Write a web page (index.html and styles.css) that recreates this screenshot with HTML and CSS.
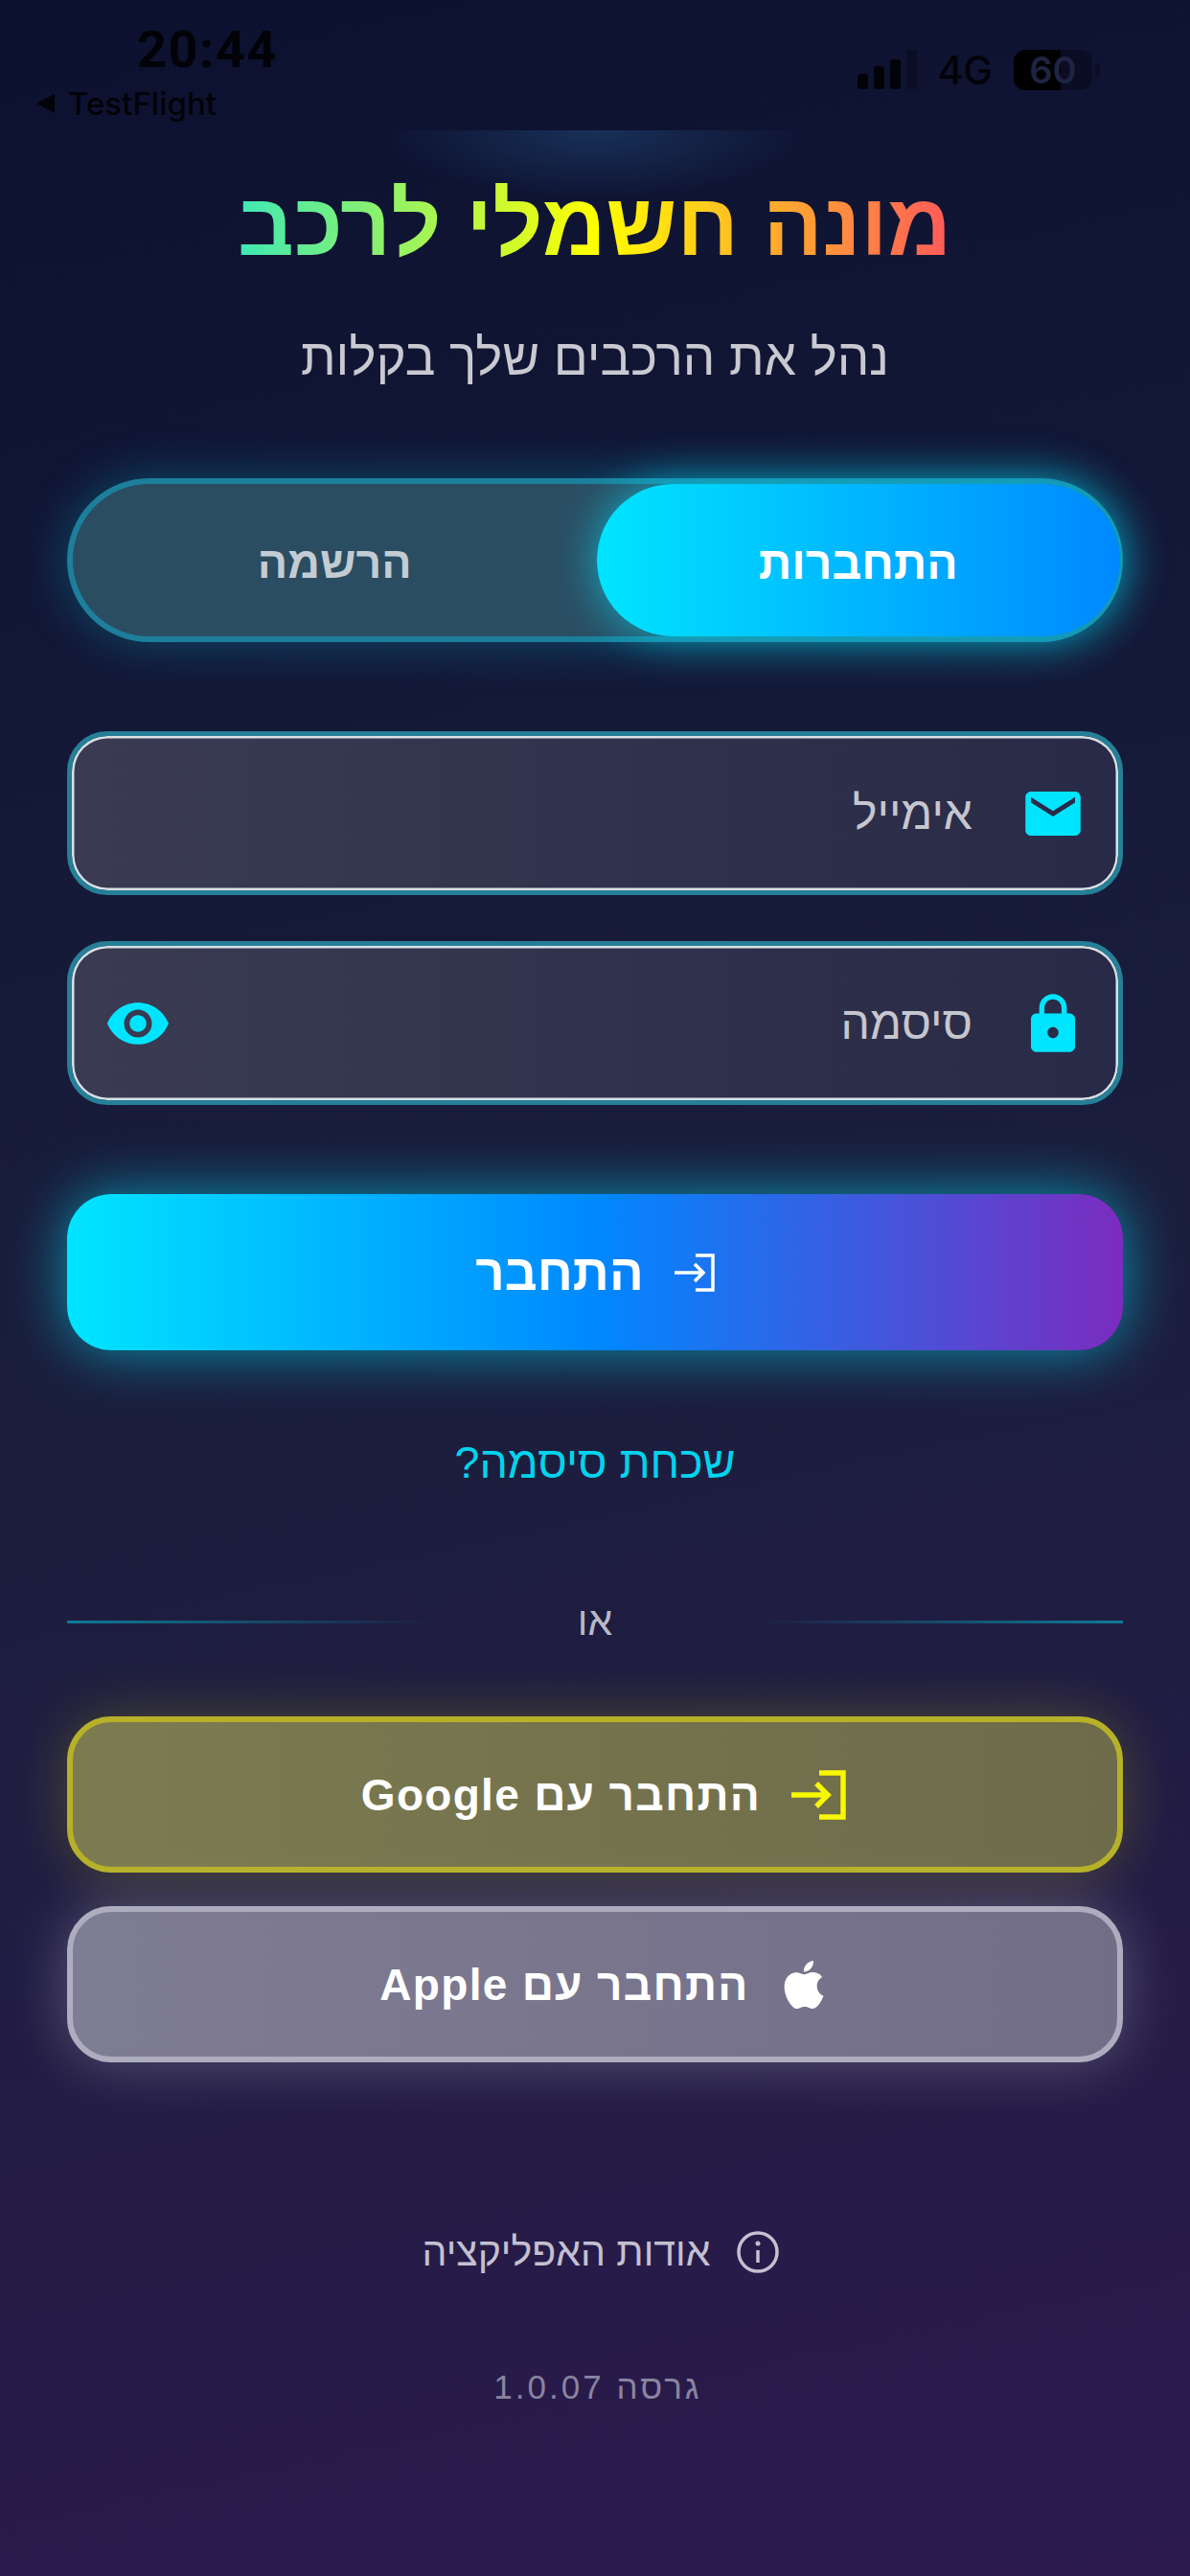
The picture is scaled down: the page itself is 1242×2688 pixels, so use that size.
FILE: index.html
```html
<!DOCTYPE html>
<html lang="he" dir="rtl">

<head>
	<meta charset="UTF-8">
	<meta name="viewport" content="width=device-width, initial-scale=1.0">
	<title>מונה חשמלי לרכב</title>
	<link rel="stylesheet" href="styles.css">
</head>

<body>

	<div class="status" dir="ltr">
		<div class="status__left">
			<div class="status__time">20:44</div>
			<div class="status__back"><span class="status__arrow"></span>TestFlight</div>
		</div>
		<div class="status__right">
			<div class="signal">
				<span class="signal__bar signal__bar--1"></span>
				<span class="signal__bar signal__bar--2"></span>
				<span class="signal__bar signal__bar--3"></span>
				<span class="signal__bar signal__bar--4"></span>
			</div>
			<div class="status__net">4G</div>
			<div class="battery">60</div>
			<span class="battery__tip"></span>
		</div>
	</div>

	<main class="page">
		<header class="head">
			<h1 class="head__title">מונה חשמלי לרכב</h1>
			<p class="head__sub">נהל את הרכבים שלך בקלות</p>
		</header>

		<div class="tabs">
			<div class="tabs__item tabs__item--on">התחברות</div>
			<div class="tabs__item">הרשמה</div>
		</div>

		<div class="field">
			<svg class="icon icon--mail" viewBox="2 4 20 16"><path d="M20 4H4c-1.1 0-2 .9-2 2v12c0 1.1.9 2 2 2h16c1.100 0 2-.9 2-2V6c0-1.100-.9-2-2-2zm0 4l-8 5-8-5V6l8 5 8-5v2z"/></svg>
			<span class="field__label">אימייל</span>
		</div>

		<div class="field field--pass">
			<svg class="icon icon--lock" viewBox="4 1 16 21"><path d="M18 8h-1V6c0-2.760-2.240-5-5-5S7 3.240 7 6v2H6c-1.100 0-2 .9-2 2v10c0 1.100.9 2 2 2h12c1.100 0 2-.9 2-2V10c0-1.100-.9-2-2-2zm-6 9c-1.100 0-2-.9-2-2s.9-2 2-2 2 .9 2 2-.9 2-2 2zm3.100-9H8.900V6c0-1.710 1.390-3.100 3.100-3.100 1.710 0 3.100 1.390 3.100 3.100v2z"/></svg>
			<span class="field__label">סיסמה</span>
			<svg class="icon icon--eye" viewBox="1 4.500 22 15"><path d="M12 4.500C7 4.500 2.730 7.610 1 12c1.730 4.390 6 7.500 11 7.500s9.270-3.110 11-7.500c-1.730-4.390-6-7.500-11-7.500zM12 17c-2.760 0-5-2.240-5-5s2.240-5 5-5 5 2.240 5 5-2.240 5-5 5zm0-8c-1.660 0-3 1.340-3 3s1.340 3 3 3 3-1.340 3-3-1.340-3-3-3z"/></svg>
		</div>

		<button class="login">
			<svg class="login__icon" viewBox="0 0 44 40"><path d="M24 2h18v36H24M2 20h29M23 11l9 9-9 9"/></svg>
			<span>התחבר</span>
		</button>

		<div class="forgot">שכחת סיסמה?</div>

		<div class="divider">
			<span class="divider__line divider__line--right"></span>
			<span class="divider__text">או</span>
			<span class="divider__line divider__line--left"></span>
		</div>

		<button class="social social--google">
			<svg class="social__enter" viewBox="0 0 57 52"><path d="M29 3h25v46H29M0 26h39M26 14l12 12-12 12"/></svg>
			<span>התחבר עם Google</span>
		</button>

		<button class="social social--apple">
			<svg class="social__apple" viewBox="0 0 24 24"><path d="M12.152 6.896c-.948 0-2.415-1.078-3.960-1.040-2.040.027-3.910 1.183-4.961 3.014-2.117 3.675-.546 9.103 1.519 12.090 1.013 1.454 2.208 3.090 3.792 3.039 1.520-.065 2.090-.987 3.935-.987 1.831 0 2.350.987 3.960.948 1.637-.026 2.676-1.480 3.676-2.948 1.156-1.688 1.636-3.325 1.662-3.415-.039-.013-3.182-1.221-3.220-4.857-.026-3.040 2.480-4.494 2.597-4.559-1.429-2.090-3.623-2.324-4.390-2.376-2-.156-3.675 1.090-4.610 1.090zM15.530 3.830c.843-1.012 1.400-2.427 1.245-3.830-1.207.052-2.662.805-3.532 1.818-.78.896-1.454 2.338-1.273 3.714 1.338.104 2.715-.688 3.559-1.701"/></svg>
			<span>התחבר עם Apple</span>
		</button>

		<div class="about">
			<svg class="about__icon" viewBox="0 0 44 44"><circle cx="22" cy="22" r="20"/><path d="M22 20v13"/><circle class="about__dot" cx="22" cy="13" r="2.500"/></svg>
			<span>אודות האפליקציה</span>
		</div>

		<div class="version">גרסה 1.0.07</div>
	</main>

</body>

</html>
```

FILE: styles.css
```css
* {
	box-sizing: border-box;
}

html,
body {
	margin: 0;
	height: 2688px;
}

body {
	width: 1242px;
	overflow: hidden;
	background: linear-gradient(168deg, #0c1130 0%, #1a1e3c 50%, #2c1a4e 100%);
	font-family: "Liberation Sans", Arial, sans-serif;
	color: #fff;
}

/* status bar */
.status {
	height: 136px;
	display: flex;
	justify-content: space-between;
	padding: 0 94px 0 38px;
	color: #020308;
}

.status__left {
	display: flex;
	flex-direction: column;
}

.status__time {
	margin: 22px 0 0 105px;
	font: 700 54px/60px Roboto, sans-serif;
	letter-spacing: 1.500px;
}

.status__back {
	display: flex;
	align-items: center;
	gap: 14px;
	margin-top: 8px;
	font: 500 33px/36px Inter, sans-serif;
}

.status__arrow {
	width: 0;
	height: 0;
	border-style: solid;
	border-width: 10px 19px 10px 0;
	border-color: transparent #020308 transparent transparent;
}

.status__right {
	display: flex;
	align-items: flex-start;
	padding-top: 52px;
}

.signal {
	display: flex;
	align-items: flex-end;
	gap: 6px;
	height: 41px;
	margin-right: 21px;
}

.signal__bar {
	width: 11px;
	border-radius: 3px;
	background: #020308;
}

.signal__bar--1 { height: 16px; }
.signal__bar--2 { height: 24px; }
.signal__bar--3 { height: 31px; }
.signal__bar--4 { height: 41px; background: #0a0d24; }

.status__net {
	margin-right: 22px;
	font: 500 41px/42px Inter, sans-serif;
}

.battery {
	width: 82px;
	height: 42px;
	border-radius: 12px;
	background: linear-gradient(90deg, #000 60%, #0a0d24 60%);
	color: #1e2442;
	font: 600 38px/42px Inter, sans-serif;
	text-align: center;
}

.battery__tip {
	width: 5px;
	height: 14px;
	margin: 14px 0 0 3px;
	border-radius: 0 4px 4px 0;
	background: #0a0d24;
}

/* page */
.page {
	padding: 0 70px;
	display: flex;
	flex-direction: column;
}

.head {
	height: 363px;
	margin: 0 -70px;
	padding-top: 45px;
	background: radial-gradient(ellipse 220px 72px at 50% 0, rgba(32, 72, 120, 0.55), rgba(32, 72, 120, 0) 100%) no-repeat;
	text-align: center;
}

.head__title {
	width: 744px;
	margin: 0 auto;
	background: linear-gradient(90deg, #3fe8b4 0%, #ffff00 50%, #ff5a5a 100%);
	-webkit-background-clip: text;
	background-clip: text;
	color: transparent;
	font-size: 92px;
	line-height: 106px;
	font-weight: 700;
	white-space: nowrap;
}

.head__sub {
	margin: 56px 0 0;
	font-size: 53px;
	line-height: 60px;
	color: #c9c9d1;
}

/* tabs */
.tabs {
	height: 171px;
	display: flex;
	border: 6px solid #1c7f9b;
	border-radius: 86px;
	background: #2b4d62;
	box-shadow: 0 0 50px rgba(0, 200, 240, 0.3);
}

.tabs__item {
	flex: 1;
	display: flex;
	align-items: center;
	justify-content: center;
	padding-top: 5px;
	border-radius: 80px;
	font-size: 46.500px;
	font-weight: 700;
	color: #c3ccd3;
}

.tabs__item--on {
	margin-right: -3px;
	background: linear-gradient(90deg, #00e5ff, #0088ff);
	box-shadow: 0 0 48px rgba(0, 229, 255, 0.65);
	font-size: 48px;
	color: #fff;
}

/* inputs */
.field {
	height: 171px;
	display: flex;
	align-items: center;
	padding-left: 37px;
	margin-top: 93px;
	border: 5px solid #257f97;
	border-radius: 42px;
	background: linear-gradient(90deg, #3a3b53, #282a47);
	box-shadow: inset 0 0 0 2.500px #d8e0e4;
}

.field--pass {
	margin-top: 48px;
}

.icon {
	fill: #00e5ff;
}

.icon--mail {
	width: 58px;
	height: 46px;
	margin: 0 39px 0 55px;
}

.icon--lock {
	width: 46px;
	height: 61px;
	margin: 0 45px 0 61px;
}

.icon--eye {
	width: 64px;
	height: 44px;
	margin-right: auto;
}

.field__label {
	font-size: 48px;
	color: #c6c6cf;
}

/* buttons */
.login {
	height: 163px;
	margin-top: 93px;
	display: flex;
	align-items: center;
	justify-content: center;
	gap: 30px;
	border: 0;
	border-radius: 46px;
	background: linear-gradient(90deg, #00e5ff 0%, #0088ff 50%, #7b2cbf 100%);
	box-shadow: 0 0 60px rgba(0, 229, 255, 0.6);
	font-family: inherit;
	font-size: 53px;
	font-weight: 700;
	color: #fff;
}

.login__icon {
	width: 44px;
	height: 40px;
	fill: none;
	stroke: #fff;
	stroke-width: 3.500;
}

.forgot {
	margin-top: 87px;
	font-size: 46.500px;
	line-height: 60px;
	text-align: center;
	color: #00d4ec;
}

.divider {
	margin-top: 111px;
	height: 50px;
	display: flex;
	align-items: center;
	justify-content: space-between;
}

.divider__line {
	width: 384px;
	height: 3px;
}

.divider__line--right {
	background: linear-gradient(270deg, #0f7a98, rgba(15, 122, 152, 0));
}

.divider__line--left {
	background: linear-gradient(90deg, #0f7a98, rgba(15, 122, 152, 0));
}

.divider__text {
	font-size: 41px;
	color: #b9b9c6;
}

.social {
	height: 163px;
	margin-top: 74px;
	display: flex;
	align-items: center;
	justify-content: center;
	gap: 32px;
	padding-left: 24px;
	border: 6px solid;
	border-radius: 46px;
	font-family: inherit;
	font-size: 46px;
	font-weight: 700;
	letter-spacing: 1.300px;
	color: #fff;
}

.social--google {
	border-color: #b6b128;
	background: linear-gradient(90deg, #7c7b50, #6e6b4a);
	box-shadow: 0 0 60px rgba(255, 255, 0, 0.2);
}

.social--apple {
	margin-top: 35px;
	border-color: #aeadc0;
	background: linear-gradient(90deg, #7f7d93, #726e88);
	box-shadow: 0 0 60px rgba(255, 255, 255, 0.25);
}

.social__enter {
	width: 57px;
	height: 52px;
	fill: none;
	stroke: #f8f800;
	stroke-width: 5.500;
}

.social__apple {
	width: 50px;
	height: 56px;
	fill: #fff;
}

.about {
	margin-top: 168px;
	height: 60px;
	display: flex;
	align-items: center;
	justify-content: center;
	gap: 28px;
	padding-left: 12px;
	font-size: 41px;
	color: #c4c0d0;
}

.about__icon {
	width: 44px;
	height: 44px;
	fill: none;
	stroke: #c4c0d0;
	stroke-width: 3.500;
}

.about__dot {
	fill: #c4c0d0;
	stroke: none;
}

.version {
	margin-top: 91px;
	padding-left: 6px;
	font-size: 35px;
	line-height: 40px;
	letter-spacing: 3px;
	text-align: center;
	color: #8a84a0;
}
```
